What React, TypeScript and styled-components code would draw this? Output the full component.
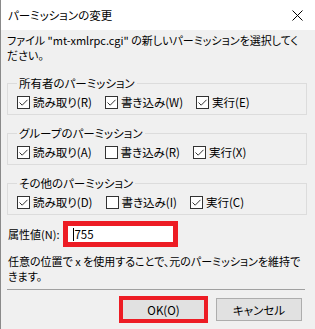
import styled, { createGlobalStyle } from "styled-components";

const GlobalStyle = createGlobalStyle`
  html, body {
    margin: 0;
    padding: 0;
    background: #f0f0f0;
  }
  body {
    font-family: "Noto Sans CJK JP", "Noto Sans", sans-serif;
    font-size: 11px;
    font-feature-settings: "palt";
    color: #000;
  }
`;

const groups = [
  {
    title: "所有者のパーミッション",
    items: [
      { label: "読み取り(R)", checked: true },
      { label: "書き込み(W)", checked: true },
      { label: "実行(E)", checked: true },
    ],
  },
  {
    title: "グループのパーミッション",
    items: [
      { label: "読み取り(A)", checked: true },
      { label: "書き込み(R)", checked: false },
      { label: "実行(X)", checked: true },
    ],
  },
  {
    title: "その他のパーミッション",
    items: [
      { label: "読み取り(D)", checked: true },
      { label: "書き込み(I)", checked: false },
      { label: "実行(C)", checked: true },
    ],
  },
];

const Check = ({ checked }: { checked: boolean }) => (
  <Box>
    {checked && (
      <svg width="11" height="11" viewBox="0 0 11 11">
        <path d="M1.5 5.5 L4.2 8.2 L9.5 2.8" fill="none" stroke="#333" strokeWidth="1" />
      </svg>
    )}
  </Box>
);

const App = () => {
  return (
    <Window>
      <GlobalStyle />
      <TitleBar>
        <Title>パーミッションの変更</Title>
        <Close>
          <svg width="11" height="11" viewBox="0 0 11 11">
            <path d="M0.5 0.5 L10.5 10.5 M10.5 0.5 L0.5 10.5" stroke="#000" strokeWidth="1" />
          </svg>
        </Close>
      </TitleBar>
      <Body>
        <Text>ファイル "mt-xmlrpc.cgi" の新しいパーミッションを選択してください。</Text>
        {groups.map((g, i) => (
          <Group key={i}>
            <Legend>{g.title}</Legend>
            <Row>
              {g.items.map((it, j) => (
                <Item key={j}>
                  <Check checked={it.checked} />
                  {it.label}
                </Item>
              ))}
            </Row>
          </Group>
        ))}
        <AttrRow>
          属性値(N):
          <Field>
            <Caret />
            755
          </Field>
        </AttrRow>
        <Note>任意の位置で x を使用することで、元のパーミッションを維持できます。</Note>
        <Separator />
        <Buttons>
          <Button primary>OK(O)</Button>
          <Button>キャンセル</Button>
        </Buttons>
      </Body>
    </Window>
  );
};

export default App;

const Window = styled.div`
  width: 315px;
  height: 329px;
  box-sizing: border-box;
  border-left: 1px solid #8a8a8a;
  background: #f0f0f0;
  display: flex;
  flex-direction: column;
  overflow: hidden;
`;

const TitleBar = styled.div`
  height: 30px;
  flex-shrink: 0;
  background: #fff;
  display: flex;
  align-items: center;
  justify-content: space-between;
  padding: 0 12px 0 7px;
`;

const Title = styled.div`
  font-size: 11.5px;
`;

const Close = styled.div`
  display: flex;
  padding-top: 1px;
`;

const Body = styled.div`
  padding: 3px 8px 0 6px;
  display: flex;
  flex-direction: column;
`;

const Text = styled.div`
  line-height: 15px;
`;

const Group = styled.fieldset`
  margin: 11px 0 0;
  border: 1px solid #dcdcdc;
  padding: 4px 8px 4px 9px;
  &:first-of-type {
    margin-top: 13px;
  }
`;

const Legend = styled.legend`
  padding: 0 2px;
  line-height: 15px;
  font-size: 11.5px;
`;

const Row = styled.div`
  display: flex;
  gap: 13px;
  line-height: 15px;
  font-size: 11.5px;
`;

const Item = styled.label`
  display: flex;
  align-items: center;
  gap: 3px;
`;

const Box = styled.span`
  width: 13px;
  height: 13px;
  box-sizing: border-box;
  border: 1px solid #333;
  background: #fff;
  display: flex;
  align-items: center;
  justify-content: center;
`;

const AttrRow = styled.div`
  margin-top: 6px;
  display: flex;
  align-items: center;
  gap: 4px;
  padding-left: 1px;
`;

const Field = styled.div`
  width: 115px;
  height: 26px;
  box-sizing: border-box;
  border: 5px solid #ed1c24;
  background: #fff;
  display: flex;
  align-items: center;
  padding-left: 5px;
  font-size: 11.5px;
`;

const Caret = styled.span`
  width: 1px;
  height: 13px;
  background: #000;
`;

const Note = styled.div`
  margin-top: 7px;
  line-height: 15px;
  padding-left: 1px;
`;

const Separator = styled.div`
  margin-top: 5px;
  height: 1px;
  background: #a0a0a0;
  margin-right: 2px;
`;

const Buttons = styled.div`
  margin-top: 6px;
  display: flex;
  justify-content: flex-end;
  align-items: center;
  gap: 8px;
  padding-right: 5px;
`;

const Button = styled.button<{ primary?: boolean }>`
  font-family: inherit;
  font-size: 11.5px;
  font-feature-settings: "palt";
  color: #000;
  background: #e1e1e1;
  box-sizing: border-box;
  padding: 0;
  width: ${({ primary }) => (primary ? "89px" : "86px")};
  height: ${({ primary }) => (primary ? "27px" : "23px")};
  border: ${({ primary }) => (primary ? "4px solid #ed1c24" : "1px solid #adadad")};
`;
